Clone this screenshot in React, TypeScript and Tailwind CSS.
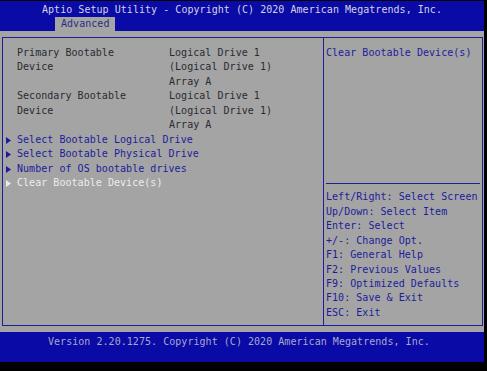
// Aptio setup utility — Advanced tab, bootable device page
const ROW = "h-[14.44px] leading-[14.44px] whitespace-pre";

const settings = [
  { label: "Primary Bootable", values: ["Logical Drive 1", "(Logical Drive 1)", "Array A"], extra: "Device" },
  { label: "Secondary Bootable", values: ["Logical Drive 1", "(Logical Drive 1)", "Array A"], extra: "Device" },
];

const menu = [
  "Select Bootable Logical Drive",
  "Select Bootable Physical Drive",
  "Number of OS bootable drives",
];

const help = [
  "Left/Right: Select Screen",
  "Up/Down: Select Item",
  "Enter: Select",
  "+/-: Change Opt.",
  "F1: General Help",
  "F2: Previous Values",
  "F9: Optimized Defaults",
  "F10: Save & Exit",
  "ESC: Exit",
];

function Arrow({ white }: { white?: boolean }) {
  return (
    <svg className="absolute left-[3px] top-[4px] w-[5px] h-[7px]" viewBox="0 0 5 7">
      <path d="M0 0 L5 3.5 L0 7 Z" fill={white ? "#ececec" : "#1c1c9c"} />
    </svg>
  );
}

export default function App() {
  return (
    <div
      className="w-[487px] h-[371px] bg-black overflow-hidden text-[10px] tracking-[0.04px]"
      style={{ fontFamily: '"DejaVu Sans Mono", "Liberation Mono", monospace' }}
    >
      <div className="w-[484px] h-[361px] mt-[1px] flex flex-col">
        {/* header */}
        <div className="h-[30px] bg-[#0a0aa6] pt-[2px] flex flex-col">
          <div className={`${ROW} pl-[42px] text-[#d4d4e0]`}>
            Aptio Setup Utility - Copyright (C) 2020 American Megatrends, Inc.
          </div>
          <div className="flex pl-[55px]">
            <div className="h-[13.5px] leading-[14px] w-[60px] pl-[6px] bg-[#a4a4a4] text-[#2c2c86] whitespace-pre">
              Advanced
            </div>
          </div>
        </div>

        {/* body */}
        <div className="h-[301px] bg-[#a4a4a4] pt-[6px] pl-[2px] pr-[1px]">
          <div className="h-[289px] border border-[#1e1e96] flex">
            {/* left */}
            <div className="w-[321px] border-r border-[#1e1e96] pt-[8px]">
              {settings.map((s) => (
                <div key={s.label} className="text-[#2a2a32]">
                  {s.values.map((v, i) => (
                    <div key={v} className={`${ROW} flex`}>
                      <span className="w-[166px] pl-[14px]">{i === 0 ? s.label : i === 1 ? s.extra : ""}</span>
                      <span>{v}</span>
                    </div>
                  ))}
                </div>
              ))}
              {menu.map((m) => (
                <div key={m} className={`${ROW} relative pl-[14px] text-[#1c1c9c]`}>
                  <Arrow />
                  {m}
                </div>
              ))}
              <div className={`${ROW} relative pl-[14px] text-[#ececec]`}>
                <Arrow white />
                Clear Bootable Device(s)
              </div>
            </div>

            {/* right */}
            <div className="flex-1 pt-[8px] text-[#1c1c9c]">
              <div className={`${ROW} pl-[2px]`}>Clear Bootable Device(s)</div>
              <div className="h-[115.5px]" />
              <div className="h-[14.44px] flex items-center pl-[2px] pr-[2px]">
                <div className="h-px w-full bg-[#1e1e96]" />
              </div>
              {help.map((h) => (
                <div key={h} className={`${ROW} pl-[2px]`}>
                  {h}
                </div>
              ))}
            </div>
          </div>
        </div>

        {/* footer */}
        <div className="h-[30px] bg-[#0a0aa6] pt-[3px]">
          <div className={`${ROW} pl-[48px] text-[#a8a8cc]`}>
            Version 2.20.1275. Copyright (C) 2020 American Megatrends, Inc.
          </div>
        </div>
      </div>
    </div>
  );
}
